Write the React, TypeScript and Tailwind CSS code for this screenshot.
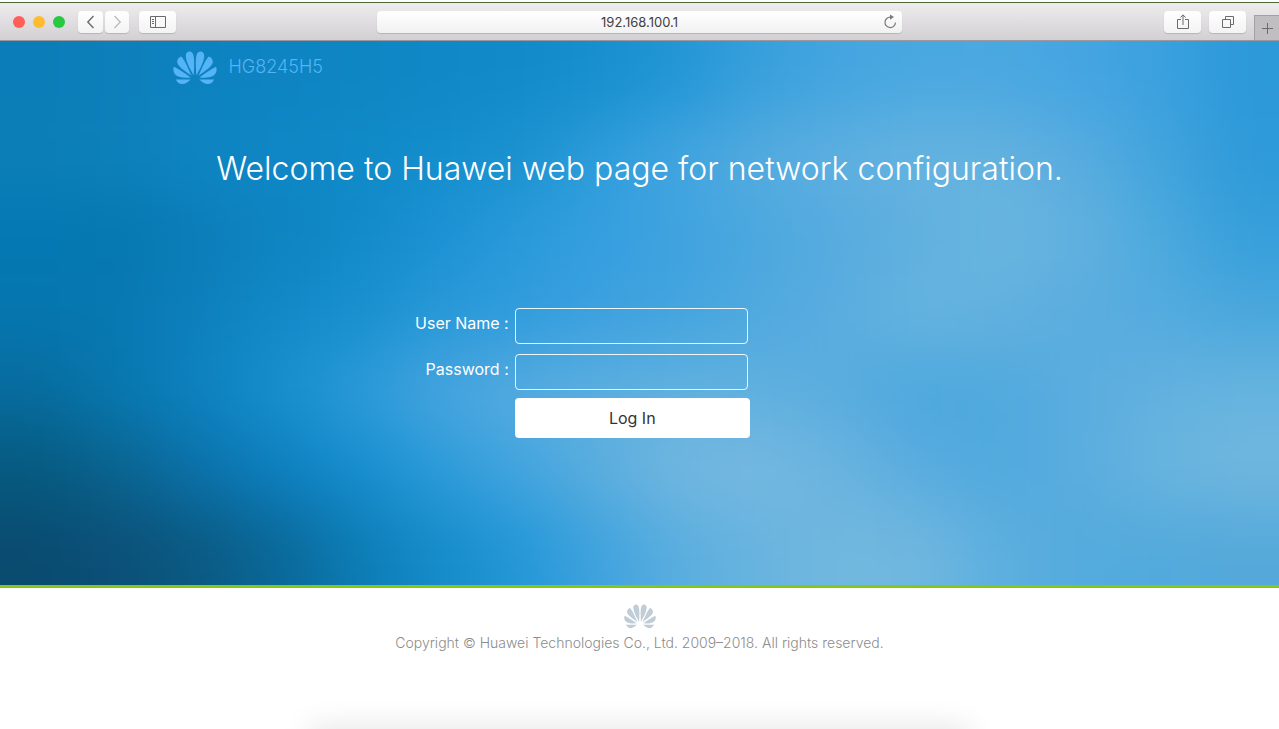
import type { ReactNode } from 'react';

// Wallpaper colours, left to right and top to bottom. Blurred together in <Wallpaper>.
const WALLPAPER = [
  '0b7db8 0d80ba 0d82c0 0e84c2 0f86c4 1087c6 128ac9 178fce 2396d6 38a0dc 44a5e0 4aa8e0 4ba8e0 45a5e2 3ba1df 2c99d9',
  '0c7fb8 0d81ba 0e85c3 0f87c6 108ac8 148ecd 1a92d0 2f9ddb 42a5e0 55abdf 5fb0e0 66b4e0 64b2df 58acdf 42a4dd 2f9ad9',
  '0378b2 0577b0 0b7db8 0e84c1 1289c8 1c92d4 2a9adb 359fdf 3fa3df 4ba8df 56abdf 60b0df 69b5df 62b1df 4caadd 369fdb',
  '0676b0 0878b2 0d80bc 1289c8 1890cf 2898d8 2f9cdd 3ca0df 42a4df 50a9df 5aaddf 66b4df 62b1df 5aaddf 54abdf 4aa7dc',
  '076c9e 0878b0 0d82c0 1890ce 2c9ad9 46a5df 56abdf 5cafdf 62b1df 60b0df 58addf 4ca7dd 50a9dd 5aaddf 62b1df 66b4df',
  '065a80 0a648f 0b72ab 0d80c0 168ed0 2c9bda 43a5df 5caede 72b7e0 76b9e1 6ab3df 58acdf 50a9dd 5aaddf 68b4df 70b7df',
  '0a4b70 0b5078 0a5a82 0a6898 0c7cb5 158cca 2497d8 40a3de 5aaedf 68b4df 72b8df 70b7df 5cafdf 54abdd 52aadc 54a9da',
].map(row => row.split(' '));

const CELL = 80;
const clamp = (v: number, max: number) => Math.max(0, Math.min(max, v));

function Wallpaper() {
  const cols = WALLPAPER[0].length;
  const rows = WALLPAPER.length;
  const cells = [];
  // two extra cells on each side keep the blur from fading at the edges
  for (let r = -2; r < rows + 2; r++) {
    for (let c = -2; c < cols + 2; c++) {
      cells.push(
        <rect key={`${r}:${c}`} x={c * CELL} y={r * CELL} width={CELL + 1} height={CELL + 1}
          fill={`#${WALLPAPER[clamp(r, rows - 1)][clamp(c, cols - 1)]}`} />
      );
    }
  }
  return (
    <svg className="absolute inset-0 -z-10 h-full w-full" viewBox={`0 0 ${cols * CELL} ${rows * CELL}`}
      preserveAspectRatio="none" aria-hidden="true">
      <filter id="soften" filterUnits="userSpaceOnUse" x={-2 * CELL} y={-2 * CELL}
        width={(cols + 4) * CELL} height={(rows + 4) * CELL} colorInterpolationFilters="sRGB">
        <feGaussianBlur stdDeviation="34" />
      </filter>
      <g filter="url(#soften)">{cells}</g>
    </svg>
  );
}

// four petals on the right half, mirrored for the left
const PETALS = 'M23.3 24.5C22.9 16 22 4 25 1.4 27.5-.4 31 1 31.2 4.4 31.2 10 27.4 17 23.3 24.5z'
  + 'M25.4 24.8C28.4 19 31.4 10 35.6 5.4 38.6 6 40.4 9 39.6 12 38 16.6 31 20.6 25.4 24.8z'
  + 'M26.4 26.4C31 23.2 37 18.8 43 15.8 44.6 19 43 23.4 40 25 36 26.9 31 26.8 26.4 26.4z'
  + 'M26.4 28.4H41.2C39.6 31.4 37.6 33 35 33 31.6 33 28.8 30.6 26.4 28.4z';

function Logo({ className }: { className: string }) {
  return (
    <svg className={className} viewBox="0 0 44 34" fill="currentColor" role="img" aria-label="Huawei">
      <path d={PETALS} />
      <path d={PETALS} transform="matrix(-1 0 0 1 44 0)" />
    </svg>
  );
}

function ToolButton({ label, className, children }: { label: string; className: string; children: ReactNode }) {
  return (
    <button type="button" aria-label={label}
      className={`flex h-[22px] items-center justify-center rounded bg-linear-to-b from-white to-[#f3f3f3] text-[#6b6b6b] shadow-[0_1px_1px_#b5b3b5] ${className}`}>
      {children}
    </button>
  );
}

function BrowserBar() {
  return (
    <header className="border-t-2 border-white">
      <div className="flex h-[39px] items-center border-t border-b border-t-[#4b6a35] border-b-[#9c989b] bg-linear-to-b from-[#eeecee] to-[#d3d0d3]">
        <div className="flex flex-1 items-center">
          <div className="ml-[13px] flex gap-2">
            <span className="size-3 rounded-full bg-[#ff5f57]" />
            <span className="size-3 rounded-full bg-[#febc2e]" />
            <span className="size-3 rounded-full bg-[#28c840]" />
          </div>
          <ToolButton label="Back" className="ml-[13px] w-[25px]">
            <svg className="size-4" viewBox="0 0 16 16" fill="none" stroke="currentColor" strokeWidth="1.4"><path d="M10.5 2 4.8 8l5.7 6" /></svg>
          </ToolButton>
          <ToolButton label="Forward" className="ml-0.5 w-[24px]">
            <svg className="size-4 text-[#bdbdbd]" viewBox="0 0 16 16" fill="none" stroke="currentColor" strokeWidth="1.4"><path d="m5.5 2 5.7 6-5.7 6" /></svg>
          </ToolButton>
          <ToolButton label="Show sidebar" className="ml-2.5 w-[37px]">
            <svg className="h-3 w-4" viewBox="0 0 16 12" fill="none" stroke="currentColor"><path d="M.5.5h15v11H.5zM5.5.5v11M2 3.5h2M2 5.5h2M2 7.5h2" /></svg>
          </ToolButton>
        </div>
        <div className="relative w-[41%]">
          <input aria-label="Address" defaultValue="192.168.100.1"
            className="block h-[22px] w-full rounded bg-linear-to-b from-white to-[#f1f1f1] text-center text-[13px] text-[#404040] shadow-[0_1px_1px_#b5b3b5] outline-none" />
          <button type="button" aria-label="Reload" className="absolute top-[3px] right-1 text-[#7a7a7a]">
            <svg className="size-4" viewBox="0 0 16 16" fill="none" stroke="currentColor" strokeWidth="1.2">
              <path d="M8.5 3.2a5.2 5.2 0 1 0 4.9 5.2" />
              <path d="M8 .4v5.4l4-2.7z" fill="currentColor" stroke="none" />
            </svg>
          </button>
        </div>
        <div className="flex flex-1 items-center justify-end self-stretch">
          <ToolButton label="Share" className="w-[37px]">
            <svg className="size-4" viewBox="0 0 16 16" fill="none" stroke="currentColor"><path d="M6 5.5H2.5v9h11v-9H10M8 11V1M5.5 3.5 8 .8l2.5 2.7" /></svg>
          </ToolButton>
          <ToolButton label="Show all tabs" className="ml-2 w-[37px]">
            <svg className="h-3.5 w-4" viewBox="0 0 16 14" fill="none" stroke="currentColor"><path d="M2.5 4.5h8v8h-8zM5.5 4.5v-3h8v8h-3" /></svg>
          </ToolButton>
          <button type="button" aria-label="New tab"
            className="ml-2 flex h-[25px] w-[25px] items-center justify-center self-end border-t border-l border-[#a3a0a3] bg-[#c0bec0] text-[#6b6b6b]">
            <svg className="size-3" viewBox="0 0 12 12" fill="none" stroke="currentColor"><path d="M6.5 1v11M1 6.5h11" /></svg>
          </button>
        </div>
      </div>
    </header>
  );
}

const field = 'h-9 w-[233px] rounded border border-white/90 bg-transparent px-2 text-[16px] text-white outline-none';

function LoginForm() {
  return (
    <form className="mt-[115px] grid grid-cols-[36%_235px] gap-x-[6px] text-[16px] text-white" onSubmit={e => e.preventDefault()}>
      <label htmlFor="user" className="pt-[3px] text-right leading-6">User Name :</label>
      <input id="user" type="text" className={field} />
      <label htmlFor="password" className="mt-2.5 pt-[3px] text-right leading-6">Password :</label>
      <input id="password" type="password" className={`mt-2.5 ${field}`} />
      <button type="submit" className="col-start-2 mt-2 h-10 rounded bg-white text-[#333]">Log In</button>
    </form>
  );
}

export default function App() {
  return (
    <div className="flex min-h-screen flex-col bg-white font-[Inter,'Open_Sans',sans-serif]">
      <BrowserBar />
      <main className="relative isolate overflow-hidden border-b-3 border-[#86c710] pb-[147px]">
        <Wallpaper />
        <div className="mx-auto max-w-[934px]">
          <div className="flex h-[54px] items-center gap-3 text-[#55b4f5]">
            <Logo className="h-[34px] w-11" />
            <span className="pb-1 text-[18px] font-[350]">HG8245H5</span>
          </div>
          <h1 className="mt-[50px] text-center text-[32px] leading-12 font-[350] whitespace-nowrap text-white">
            Welcome to Huawei web page for network configuration.
          </h1>
          <LoginForm />
        </div>
      </main>
      <footer className="flex flex-1 flex-col items-center overflow-hidden text-[#8c8c8c]">
        <Logo className="mt-4 h-[25px] w-8 text-[#c0ccd6]" />
        <p className="mt-1 text-center text-[14px] leading-5 font-[350]">Copyright © Huawei Technologies Co., Ltd. 2009–2018. All rights reserved.</p>
        <div className="mt-auto h-0 w-[49%] shadow-[0_16px_32px_16px_rgba(0,0,0,0.12)]" />
      </footer>
    </div>
  );
}
